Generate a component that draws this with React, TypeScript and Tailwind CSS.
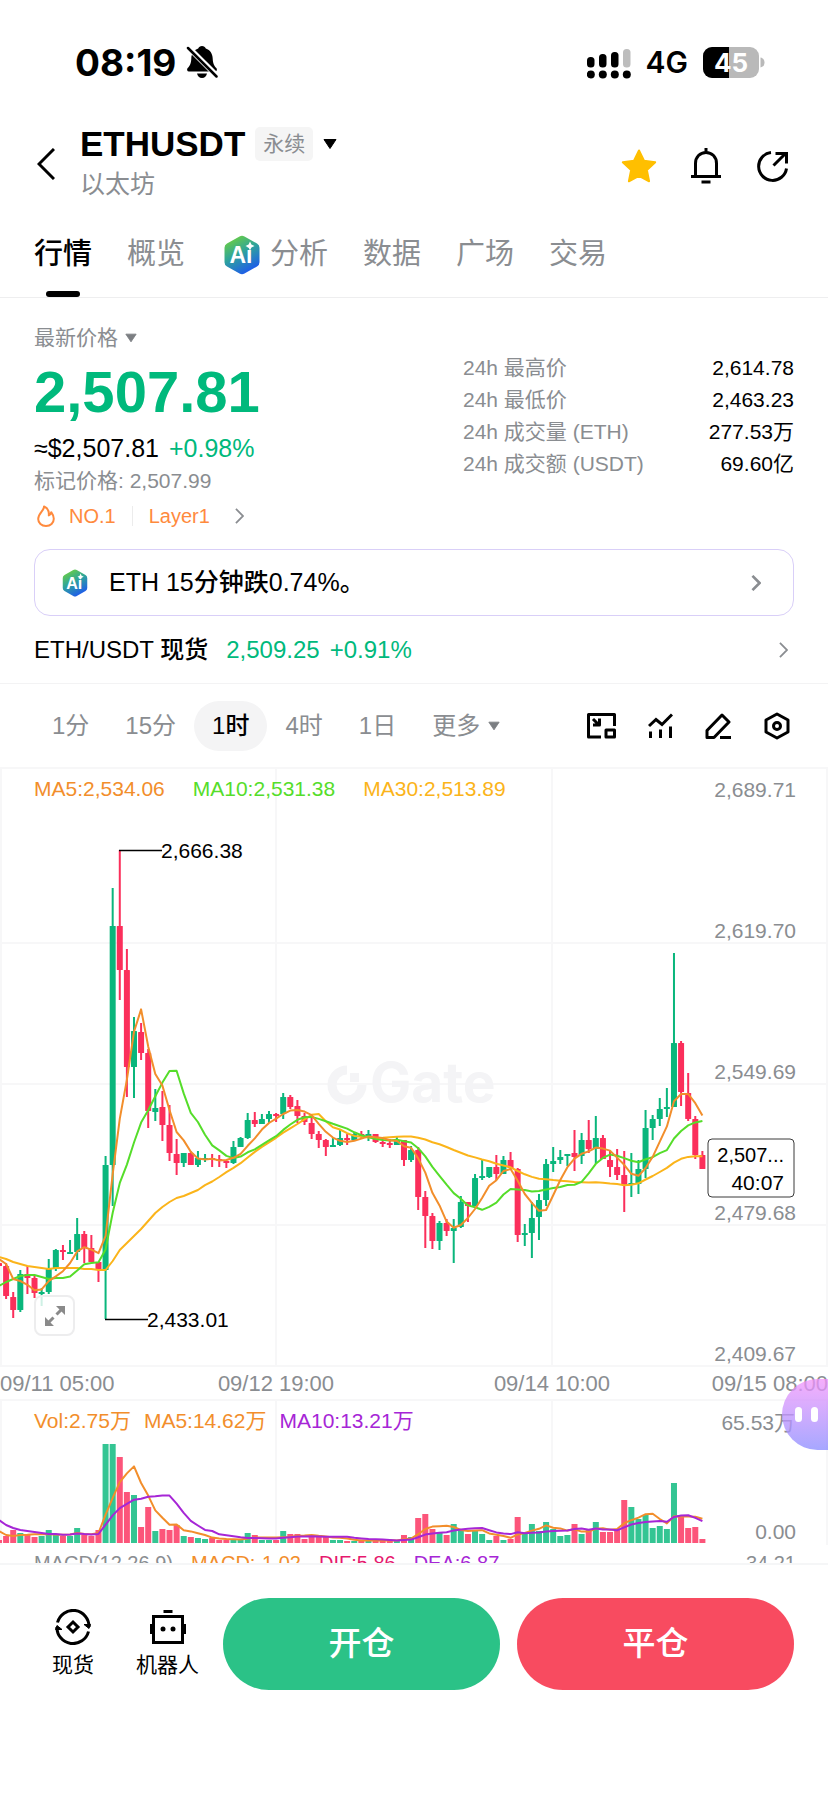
import { useState } from "react";

type Candle = {
  high: number;
  top: number;
  bottom: number;
  low: number;
  up: boolean;
  vol: number;
};

const UP = true;
const DOWN = false;

// high, body top, body bottom, low (chart units from the top edge), direction, volume
const RAW: [number, number, number, number, boolean, number][] = [
  [496, 496, 499, 499, DOWN, 3],
  [496, 499, 529, 532, DOWN, 7],
  [525, 530, 543, 551, DOWN, 13],
  [503, 507, 543, 545, UP, 10],
  [499, 507, 511, 527, DOWN, 8],
  [509, 511, 526, 531, DOWN, 6],
  [521, 525, 527, 539, UP, 7],
  [492, 502, 525, 527, UP, 13],
  [482, 483, 502, 504, UP, 8],
  [478, 483, 485, 493, DOWN, 7],
  [473, 485, 487, 487, UP, 7],
  [451, 467, 485, 493, UP, 15],
  [464, 467, 481, 496, DOWN, 8],
  [468, 481, 495, 495, DOWN, 7],
  [495, 495, 503, 515, DOWN, 13],
  [389, 398, 503, 552, UP, 99],
  [121, 159, 398, 439, UP, 99],
  [83, 159, 203, 233, DOWN, 86],
  [182, 203, 300, 330, DOWN, 51],
  [250, 264, 300, 331, UP, 48],
  [256, 265, 286, 293, DOWN, 16],
  [282, 286, 344, 361, DOWN, 36],
  [322, 341, 345, 354, UP, 12],
  [324, 340, 358, 374, DOWN, 14],
  [338, 358, 386, 394, DOWN, 13],
  [372, 387, 396, 408, DOWN, 18],
  [386, 386, 396, 400, UP, 7],
  [384, 386, 398, 398, DOWN, 6],
  [384, 391, 398, 400, UP, 5],
  [387, 391, 393, 395, UP, 4],
  [387, 391, 393, 400, DOWN, 5],
  [388, 392, 394, 400, DOWN, 3],
  [393, 394, 396, 401, DOWN, 3],
  [374, 380, 396, 397, UP, 4],
  [370, 371, 380, 380, UP, 3],
  [346, 353, 371, 372, UP, 10],
  [345, 353, 357, 360, DOWN, 8],
  [347, 352, 357, 357, UP, 3],
  [344, 347, 352, 356, UP, 3],
  [346, 347, 349, 355, DOWN, 3],
  [326, 330, 347, 352, UP, 12],
  [328, 330, 340, 342, DOWN, 9],
  [333, 339, 349, 356, DOWN, 9],
  [346, 349, 355, 358, DOWN, 4],
  [349, 356, 367, 372, DOWN, 6],
  [364, 367, 373, 381, DOWN, 8],
  [372, 373, 380, 389, DOWN, 6],
  [370, 378, 380, 380, UP, 3],
  [362, 371, 378, 379, UP, 3],
  [367, 371, 373, 378, DOWN, 2],
  [365, 367, 373, 374, UP, 2],
  [364, 367, 369, 372, DOWN, 3],
  [363, 367, 369, 374, UP, 2],
  [367, 367, 375, 376, DOWN, 3],
  [372, 375, 377, 380, DOWN, 3],
  [372, 376, 378, 381, DOWN, 3],
  [369, 373, 378, 378, UP, 2],
  [373, 373, 393, 399, DOWN, 8],
  [379, 383, 393, 395, UP, 6],
  [380, 383, 430, 443, DOWN, 25],
  [424, 430, 449, 481, DOWN, 29],
  [446, 449, 474, 482, DOWN, 14],
  [454, 456, 474, 483, UP, 10],
  [452, 456, 464, 469, DOWN, 8],
  [452, 461, 464, 496, UP, 19],
  [429, 435, 460, 461, UP, 14],
  [435, 435, 439, 455, DOWN, 9],
  [407, 411, 439, 439, UP, 13],
  [393, 409, 411, 413, UP, 9],
  [400, 400, 410, 411, UP, 3],
  [388, 400, 407, 413, DOWN, 7],
  [389, 393, 407, 407, UP, 3],
  [385, 393, 401, 402, DOWN, 4],
  [401, 402, 468, 475, DOWN, 26],
  [457, 466, 468, 479, UP, 10],
  [435, 451, 466, 491, UP, 19],
  [427, 433, 450, 473, UP, 12],
  [392, 397, 433, 439, UP, 21],
  [380, 394, 397, 405, UP, 14],
  [383, 390, 393, 397, UP, 7],
  [387, 387, 389, 399, UP, 8],
  [363, 386, 390, 404, DOWN, 19],
  [366, 373, 389, 397, UP, 9],
  [353, 373, 382, 386, DOWN, 14],
  [349, 371, 382, 397, UP, 21],
  [368, 371, 392, 392, DOWN, 11],
  [384, 393, 400, 410, DOWN, 11],
  [382, 400, 408, 413, DOWN, 13],
  [384, 408, 418, 445, DOWN, 43],
  [386, 416, 418, 430, UP, 36],
  [393, 402, 417, 427, UP, 24],
  [343, 361, 402, 411, UP, 28],
  [348, 352, 361, 373, UP, 15],
  [331, 342, 352, 359, UP, 17],
  [321, 340, 342, 350, UP, 14],
  [186, 276, 340, 340, UP, 60],
  [274, 276, 325, 339, DOWN, 26],
  [306, 326, 352, 354, DOWN, 15],
  [349, 352, 388, 392, DOWN, 16],
  [384, 388, 402, 402, DOWN, 4],
];

const CANDLES: Candle[] = RAW.map(([high, top, bottom, low, up, vol]) => ({ high, top, bottom, low, up, vol }));
const CLOSES = CANDLES.map(c => (c.up ? c.top : c.bottom));
const VOLUMES = CANDLES.map(c => c.vol);

const xAt = (i: number) => -1 + i * 7.105;

// `lead` holds the averages for the first points, whose window starts off screen
function movingAverage(values: number[], size: number, lead: number[]) {
  return values.map((_, i) => {
    if (i < lead.length) return lead[i];
    const part = values.slice(i - size + 1, i + 1);
    return part.reduce((a, b) => a + b, 0) / part.length;
  });
}

const toPoints = (ys: number[]) => ys.map((y, i) => `${xAt(i).toFixed(1)},${y.toFixed(1)}`).join(" ");

const MA5 = toPoints(movingAverage(CLOSES, 5, [492, 497, 512, 514]));
const MA10 = toPoints(movingAverage(CLOSES, 10, [519, 515, 512, 509, 508, 508, 510, 512, 511]));
const MA30 = toPoints(
  movingAverage(CLOSES, 30, [
    490, 492, 495, 497, 499, 500, 501, 502, 501, 501, 501, 501, 502, 502, 503, 503, 494, 483, 476, 469, 462, 454, 446,
    440, 435, 431, 429, 426, 423,
  ])
);

const VOL_BASE = 144;
const VOL_MA5 = toPoints(movingAverage(VOLUMES, 5, [12, 8, 7, 8]).map(v => VOL_BASE - v));
const VOL_MA10 = toPoints(movingAverage(VOLUMES, 10, [23, 18, 15, 13, 12, 11, 10, 9, 9]).map(v => VOL_BASE - v));

const TABS = ["行情", "概览", "分析", "数据", "广场", "交易"];
const INTERVALS = ["1分", "15分", "1时", "4时", "1日"];

const STATS = [
  { label: "24h 最高价", value: "2,614.78" },
  { label: "24h 最低价", value: "2,463.23" },
  { label: "24h 成交量 (ETH)", value: "277.53万" },
  { label: "24h 成交额 (USDT)", value: "69.60亿" },
];

const PRICE_LABELS = [
  { y: 30, text: "2,689.71" },
  { y: 171, text: "2,619.70" },
  { y: 312, text: "2,549.69" },
  { y: 453, text: "2,479.68" },
  { y: 594, text: "2,409.67" },
];

function AiLogo({ className }: { className: string }) {
  return (
    <svg viewBox="0 0 36 40" className={className} aria-hidden="true">
      <defs>
        <linearGradient id="ai-fill" x1="0.2" y1="0" x2="0.7" y2="1">
          <stop offset="0" stopColor="#6fd13c" />
          <stop offset="0.45" stopColor="#2fa59a" />
          <stop offset="1" stopColor="#1c55f2" />
        </linearGradient>
      </defs>
      <path
        d="M15.500 1.400a5 5 0 0 1 5 0l12.500 7.100a5 5 0 0 1 2.500 4.300v14.400a5 5 0 0 1-2.500 4.300l-12.500 7.100a5 5 0 0 1-5 0L3 31.500a5 5 0 0 1-2.500-4.300V12.800A5 5 0 0 1 3 8.500z"
        fill="url(#ai-fill)"
      />
      <text x="17" y="28" textAnchor="middle" fontSize="23" fontWeight="700" fill="#fff">
        Ai
      </text>
      <path d="M26 6.500l1.400 3.100 3.100 1.400-3.100 1.400L26 15.500l-1.400-3.100-3.100-1.400 3.100-1.400z" fill="#fff" />
    </svg>
  );
}

function Caret({ className }: { className: string }) {
  return (
    <svg viewBox="0 0 14 10" className={className} aria-hidden="true">
      <path d="M1 0.500h12L7 9.500z" fill="currentColor" stroke="currentColor" strokeLinejoin="round" />
    </svg>
  );
}

function Chevron({ className, width = 2 }: { className: string; width?: number }) {
  return (
    <svg viewBox="0 0 10 18" className={className} fill="none" stroke="currentColor" strokeWidth={width} aria-hidden="true">
      <path d="M1 1l8 8-8 8" />
    </svg>
  );
}

function StatusBar() {
  return (
    <div className="flex h-[124px] items-center justify-between pl-[75px] pr-[63px] [font-family:Inter,sans-serif]">
      <div className="flex items-center gap-2.5">
        <span className="text-[37px] font-bold leading-none">08:19</span>
        <svg viewBox="0 0 32 34" className="h-[34px] w-8" aria-hidden="true">
          <path
            d="M16 1c1.800 0 3.200 1 3.800 2.500 4.500 1.500 6.700 5.300 6.900 10 .2 5 1.300 7.200 3.600 9.500 1.200 1.300.6 3.500-1.300 3.500H3c-1.900 0-2.500-2.200-1.300-3.500 2.300-2.300 3.400-4.500 3.600-9.500.2-4.700 2.400-8.500 6.900-10C12.800 2 14.200 1 16 1z"
            fill="#000"
          />
          <path d="M11 28.500h10c-.5 2.700-2.400 4.500-5 4.500s-4.500-1.800-5-4.500z" fill="#000" />
          <path d="M2 2l30 30" stroke="#fff" strokeWidth="5.500" />
          <path d="M2 3l28.500 28.500" stroke="#000" strokeWidth="2.500" strokeLinecap="round" />
        </svg>
      </div>
      <div className="flex items-center gap-[15px]">
        <svg viewBox="0 0 44 30" className="mt-1 h-[30px] w-11" aria-hidden="true">
          <rect x="0" y="8" width="7.500" height="10.500" rx="3.500" />
          <rect x="12" y="5" width="7.500" height="13.500" rx="3.500" />
          <rect x="24" y="3" width="7.500" height="15.500" rx="3.500" />
          <rect x="36" y="0" width="7.500" height="18.500" rx="3.500" fill="#bdbdbd" />
          <circle cx="3.800" cy="25.500" r="4" />
          <circle cx="15.800" cy="25.500" r="4" />
          <circle cx="27.800" cy="25.500" r="4" />
          <circle cx="39.800" cy="25.500" r="4" />
        </svg>
        <span className="text-[30px] font-semibold leading-none">4G</span>
        <svg viewBox="0 0 62 31" className="h-[31px] w-[62px]" aria-label="45%">
          <rect width="56" height="31" rx="9" fill="#b9b9b9" />
          <path d="M9 0h17v31H9a9 9 0 0 1-9-9V9a9 9 0 0 1 9-9z" />
          <path d="M57.500 10.500c2.500.5 4 2.500 4 5s-1.500 4.500-4 5z" fill="#b9b9b9" />
          <text x="28" y="25" textAnchor="middle" fontSize="26" fontWeight="700" fill="#fff">
            45
          </text>
        </svg>
      </div>
    </div>
  );
}

function Header() {
  return (
    <header className="flex items-center pl-[37px] pr-[39px]">
      <button aria-label="返回" className="w-[43px]">
        <svg viewBox="0 0 18 32" className="h-8 w-[18px]" fill="none" stroke="#000" strokeWidth="3">
          <path d="M17 1L2 16l15 15" />
        </svg>
      </button>
      <div className="flex-1">
        <button className="flex h-10 items-center">
          <h1 className="text-[35px] font-bold leading-10">ETHUSDT</h1>
          <span className="ml-2.5 h-[34px] rounded-[5px] bg-[#f5f5f5] px-2 text-[21px] leading-[33px] text-[#8a8d91]">
            永续
          </span>
          <Caret className="ml-2.5 h-2.5 w-3.5" />
        </button>
        <p className="text-[25px] leading-10 text-[#8a8d91]">以太坊</p>
      </div>
      <div className="flex items-center gap-[34px] pt-1">
        <button aria-label="收藏">
          <svg viewBox="0 0 36 34" className="h-[34px] w-9">
            <path
              d="M18 1.500l5 10.300 11.200 1.400-8.300 7.900 2.200 11.200L18 26.900 7.900 32.300l2.200-11.200L1.800 13.200 13 11.800z"
              fill="#ffbf00"
              stroke="#ffbf00"
              strokeWidth="2"
              strokeLinejoin="round"
            />
          </svg>
        </button>
        <button aria-label="提醒">
          <svg viewBox="0 0 30 36" className="h-9 w-[30px]" fill="none" stroke="#000" strokeWidth="3">
            <path d="M15 0v4M4.500 28V15.500C4.500 9 9 4.500 15 4.500S25.500 9 25.500 15.500V28M0 28.500h30M10.500 34h9" />
          </svg>
        </button>
        <button aria-label="分享">
          <svg viewBox="0 0 34 34" className="h-[34px] w-[34px]" fill="none" stroke="#000" strokeWidth="3">
            <path d="M16 3.500a14 14 0 1 0 15.500 16M18.500 16.500L30 5M20.500 4.500h11v10" />
          </svg>
        </button>
      </div>
    </header>
  );
}

function Tabs() {
  const [active, setActive] = useState("行情");
  return (
    <nav className="flex h-[94px] gap-[35px] border-b border-[#eeeeef] px-[34px]">
      {TABS.map(tab => (
        <button
          key={tab}
          onClick={() => setActive(tab)}
          className={`relative flex items-center pt-2 text-[29px] ${
            tab === active ? "font-medium text-black" : "text-[#8a8d91]"
          }`}
        >
          {tab === "分析" && <AiLogo className="ml-1 mr-2.5 h-10 w-9" />}
          {tab}
          {tab === active && (
            <span className="absolute bottom-0 left-1/2 h-1.5 w-[34px] -translate-x-1/2 rounded-full bg-black" />
          )}
        </button>
      ))}
    </nav>
  );
}

function PriceSummary() {
  return (
    <section className="px-[34px] pt-[26px]">
      <div className="flex justify-between">
        <div>
          <button className="flex items-center gap-[7px] text-[21px] leading-7 text-[#8a8d91]">
            最新价格
            <Caret className="h-2.5 w-3 text-[#7b7e82]" />
          </button>
          <div className="text-[58px] font-bold leading-[80px] text-[#00b97c]">2,507.81</div>
          <div className="flex gap-2.5 text-[25px] leading-8">
            <span>≈$2,507.81</span>
            <span className="text-[#00b97c]">+0.98%</span>
          </div>
          <div className="text-[21px] leading-[34px] text-[#8a8d91]">标记价格: 2,507.99</div>
          <button className="flex h-9 items-center text-xl text-[#ff8a3d]">
            <svg viewBox="0 0 18 22" className="ml-[3px] h-[22px] w-[18px]" fill="none" stroke="currentColor" strokeWidth="2">
              <path
                d="M7 1.500c.5 4-5.800 6.500-5.800 12.500C1.200 18 4.500 21 9 21s7.800-3 7.800-7.200c0-3-1.400-5-2.600-6.600-.4 1.600-1.200 2.600-2.400 3.200C12.200 6.500 10.500 3 7 1.500z"
                strokeLinejoin="round"
              />
            </svg>
            <span className="ml-3.5">NO.1</span>
            <span className="mx-4 h-5 w-px bg-[#ececec]" />
            <span>Layer1</span>
            <Chevron className="ml-[25px] h-4 w-[9px] text-[#8a8d91]" />
          </button>
        </div>
        <dl className="mt-7 w-[331px] shrink-0 text-[21px] leading-8">
          {STATS.map(s => (
            <div key={s.label} className="flex justify-between">
              <dt className="text-[#8a8d91]">{s.label}</dt>
              <dd>{s.value}</dd>
            </div>
          ))}
        </dl>
      </div>

      <button className="mt-[15px] flex h-[67px] w-full items-center rounded-2xl border border-[#d9cff8] pl-[27px] pr-8 text-[25px] font-medium">
        <AiLogo className="mr-[21px] h-7 w-[26px]" />
        ETH 15分钟跌0.74%。
        <Chevron className="ml-auto h-4 w-2.5 text-[#8a8d91]" width={3} />
      </button>

      <a href="#spot" className="flex h-[67px] items-center text-2xl">
        <span className="font-medium">ETH/USDT 现货</span>
        <span className="ml-[18px] text-[#00b97c]">2,509.25</span>
        <span className="ml-2.5 text-[#00b97c]">+0.91%</span>
        <Chevron className="ml-auto mr-1.5 h-4 w-[9px] text-[#8a8d91]" />
      </a>
    </section>
  );
}

function IntervalBar() {
  const [active, setActive] = useState("1时");
  return (
    <div className="flex h-[84px] items-center justify-between border-t border-[#f3f3f4] pl-[34px] pr-[38px]">
      <div className="flex items-center text-2xl text-[#8a8d91]">
        {INTERVALS.map(name => (
          <button
            key={name}
            onClick={() => setActive(name)}
            className={`h-[50px] rounded-full px-[18px] ${name === active ? "bg-[#f4f4f5] font-medium text-black" : ""}`}
          >
            {name}
          </button>
        ))}
        <button className="flex h-[50px] items-center gap-2 pl-[18px]">
          更多
          <Caret className="h-2.5 w-3 text-[#7b7e82]" />
        </button>
      </div>
      <div className="flex items-center gap-8">
        <button aria-label="画中画">
          <svg viewBox="0 0 29 26" className="h-[26px] w-[29px]" fill="none" stroke="#000" strokeWidth="3">
            <path d="M14 24H1.500V1.500h26V13M19 17h8.500v7H19zM6 6l6 6M12.500 5.500V12H6" strokeLinejoin="round" />
          </svg>
        </button>
        <button aria-label="指标">
          <svg viewBox="0 0 25 26" className="h-[26px] w-[25px]" fill="none" stroke="#000" strokeWidth="3">
            <path d="M1 13l7-6.500 6 5L24 1.500M2.500 18.500V25M12.500 16.500V25M22.500 13.500V25" />
          </svg>
        </button>
        <button aria-label="画线">
          <svg viewBox="0 0 27 26" className="h-[26px] w-[27px]" fill="none" stroke="#000" strokeWidth="3">
            <path d="M2 24.500v-7L17 2l7 7L9 24.500zM15 24.500h11" strokeLinejoin="round" />
          </svg>
        </button>
        <button aria-label="设置">
          <svg viewBox="0 0 26 28" className="h-7 w-[26px]" fill="none" stroke="#000" strokeWidth="3">
            <path d="M13 2l11 6v12l-11 6-11-6V8z" strokeLinejoin="round" />
            <circle cx="13" cy="14" r="3.500" />
          </svg>
        </button>
      </div>
    </div>
  );
}

function PriceChart() {
  return (
    <div className="relative">
      <svg viewBox="0 0 828 632" className="block w-full">
        <g stroke="#f7f7f8" strokeWidth="2">
          <path d="M0 1h828M0 176h828M0 317h828M0 458h828M0 599h828M1 0v599M276 0v599M552 0v599M827 0v599" />
        </g>

        {/* Watermark */}
        <g>
          <path d="M347 303a15 15 0 1 0 15 15" fill="none" stroke="#f4f4f6" strokeWidth="9" />
          <rect x="350" y="306" width="9" height="9" fill="#f4f4f6" />
          <text
            x="370"
            y="335"
            fontSize="55"
            fontWeight="700"
            fill="#f4f4f6"
            className="[font-family:Inter,sans-serif]"
          >
            Gate
          </text>
        </g>

        {CANDLES.map((c, i) => {
          const x = xAt(i);
          return (
            <g key={i} fill={c.up ? "#0ab67c" : "#fb2f5b"}>
              <rect x={x - 1} y={c.high} width="2" height={c.low - c.high} />
              <rect x={x - 3} y={c.top} width="6" height={c.bottom - c.top} rx="0.500" />
            </g>
          );
        })}

        <g fill="none" strokeWidth="2" strokeLinejoin="round">
          <polyline points={MA30} stroke="#fbb41a" />
          <polyline points={MA10} stroke="#55dd2a" />
          <polyline points={MA5} stroke="#f28e2b" />
        </g>

        <path d="M119 83.500h43M105 552.500h43" stroke="#000" strokeWidth="1.500" />
        <g fontSize="21" fill="#000">
          <text x="161" y="91">2,666.38</text>
          <text x="147" y="560">2,433.01</text>
        </g>

        <g fontSize="21" fill="#8a8d91">
          {PRICE_LABELS.map(l => (
            <text key={l.text} x="796" y={l.y} textAnchor="end">
              {l.text}
            </text>
          ))}
        </g>
        <g fontSize="22" fill="#8a8d91">
          <text x="0" y="624">09/11 05:00</text>
          <text x="276" y="624" textAnchor="middle">09/12 19:00</text>
          <text x="552" y="624" textAnchor="middle">09/14 10:00</text>
          <text x="828" y="624" textAnchor="end">09/15 08:00</text>
        </g>

        {/* Current price tag */}
        <g>
          <rect x="708" y="372" width="86" height="58" rx="4" fill="#fff" stroke="#3a3a3a" />
          <text x="784" y="395" fontSize="20" textAnchor="end">2,507...</text>
          <text x="784" y="423" fontSize="21" textAnchor="end">40:07</text>
        </g>
      </svg>

      <div className="absolute left-[34px] top-2.5 flex gap-7 text-[21px] leading-6">
        <span className="text-[#f28e2b]">MA5:2,534.06</span>
        <span className="text-[#55dd2a]">MA10:2,531.38</span>
        <span className="text-[#fbb41a]">MA30:2,513.89</span>
      </div>

      <button
        aria-label="全屏"
        className="absolute bottom-[63px] left-[34px] flex h-[41px] w-[41px] items-center justify-center rounded-lg border-2 border-[#ededee] bg-white/80"
      >
        <svg viewBox="0 0 20 20" className="h-5 w-5" fill="#8a8a8a" stroke="#8a8a8a" strokeWidth="3">
          <path d="M11.500 8.500L16 4M8.500 11.500L4 16" />
          <path d="M11 0h9v9zM0 11v9h9z" stroke="none" />
        </svg>
      </button>
    </div>
  );
}

function VolumeChart() {
  return (
    <div className="relative border-b-2 border-[#f5f6f7]">
      <svg viewBox="0 0 828 146" className="block w-full">
        <path d="M0 1h828M1 0v146M276 0v146M552 0v146M827 0v146" stroke="#f7f7f8" strokeWidth="2" />
        {CANDLES.map((c, i) => (
          <rect
            key={i}
            x={xAt(i) - 3}
            y={VOL_BASE - c.vol}
            width="6"
            height={c.vol}
            fill={c.up ? "#34c593" : "#fc557a"}
          />
        ))}
        <g fill="none" strokeWidth="2" strokeLinejoin="round">
          <polyline points={VOL_MA5} stroke="#f28e2b" />
          <polyline points={VOL_MA10} stroke="#a626d6" />
        </g>
        <g fontSize="21" fill="#8a8d91" textAnchor="end">
          <text x="795" y="31">65.53万</text>
          <text x="796" y="140">0.00</text>
        </g>
      </svg>

      <div className="absolute left-[34px] top-2.5 flex gap-[13px] text-[21px] leading-6">
        <span className="text-[#f28e2b]">Vol:2.75万</span>
        <span className="text-[#f28e2b]">MA5:14.62万</span>
        <span className="text-[#a626d6]">MA10:13.21万</span>
      </div>

      {/* Next indicator peeks out from under the action bar */}
      <div className="flex h-[18px] gap-[18px] overflow-hidden pl-[34px] pr-8 pt-2 text-xl leading-5">
        <span className="text-[#8a8d91]">MACD(12,26,9)</span>
        <span className="text-[#f28e2b]">MACD:-1.02</span>
        <span className="text-[#e6196e]">DIF:5.86</span>
        <span className="text-[#a626d6]">DEA:6.87</span>
        <span className="ml-auto text-[#8a8d91]">34.21</span>
      </div>

      {/* Assistant bubble docked to the screen edge */}
      <button
        aria-label="助手"
        className="absolute -top-5 right-0 flex h-[71px] w-[46px] items-center gap-[9px] rounded-l-[36px] bg-linear-to-b from-[#f293fb]/75 to-[#9091ff]/80 pl-[13px]"
      >
        <span className="h-[15px] w-[7px] rounded-full bg-white" />
        <span className="h-[15px] w-[7px] rounded-full bg-white" />
      </button>
    </div>
  );
}

function ActionBar() {
  return (
    <footer className="flex items-center pb-[105px] pl-[52px] pr-[34px] pt-[33px]">
      <button className="flex flex-col items-center gap-1.5 text-[21px] leading-7">
        <svg viewBox="0 0 36 36" className="h-9 w-9" fill="none" stroke="#000" strokeWidth="3">
          <path d="M2.500 13.500a16 16 0 0 1 31.500 4.500M33.500 22.500A16 16 0 0 1 2 18" />
          <path d="M18 13l5 5-5 5-5-5z" />
          <path d="M29 15.500l6.500 0-1.500 4zM7 20.500H.500l1.500-4z" fill="#000" strokeWidth="1" />
        </svg>
        现货
      </button>
      <button className="ml-[42px] flex flex-col items-center gap-1.5 text-[21px] leading-7">
        <svg viewBox="0 0 36 36" className="h-9 w-9" fill="none" stroke="#000" strokeWidth="3">
          <path d="M3.500 7.500h29v26h-29zM13.500 2.500h9M1.500 15v10M34.500 15v10" />
          <g fill="#000" stroke="none">
            <circle cx="13" cy="20" r="2.500" />
            <circle cx="23" cy="20" r="2.500" />
          </g>
        </svg>
        机器人
      </button>
      <div className="ml-6 flex flex-1 gap-[17px] text-[33px] font-medium text-white">
        <button className="h-[92px] flex-1 rounded-full bg-[#2bc287]">开仓</button>
        <button className="h-[92px] flex-1 rounded-full bg-[#f84b60]">平仓</button>
      </div>
    </footer>
  );
}

export default function App() {
  return (
    <main className="min-h-screen overflow-x-hidden bg-white text-black [font-family:'Liberation_Sans','Noto_Sans_CJK_SC',sans-serif]">
      <StatusBar />
      <Header />
      <Tabs />
      <PriceSummary />
      <IntervalBar />
      <PriceChart />
      <VolumeChart />
      <ActionBar />
    </main>
  );
}
